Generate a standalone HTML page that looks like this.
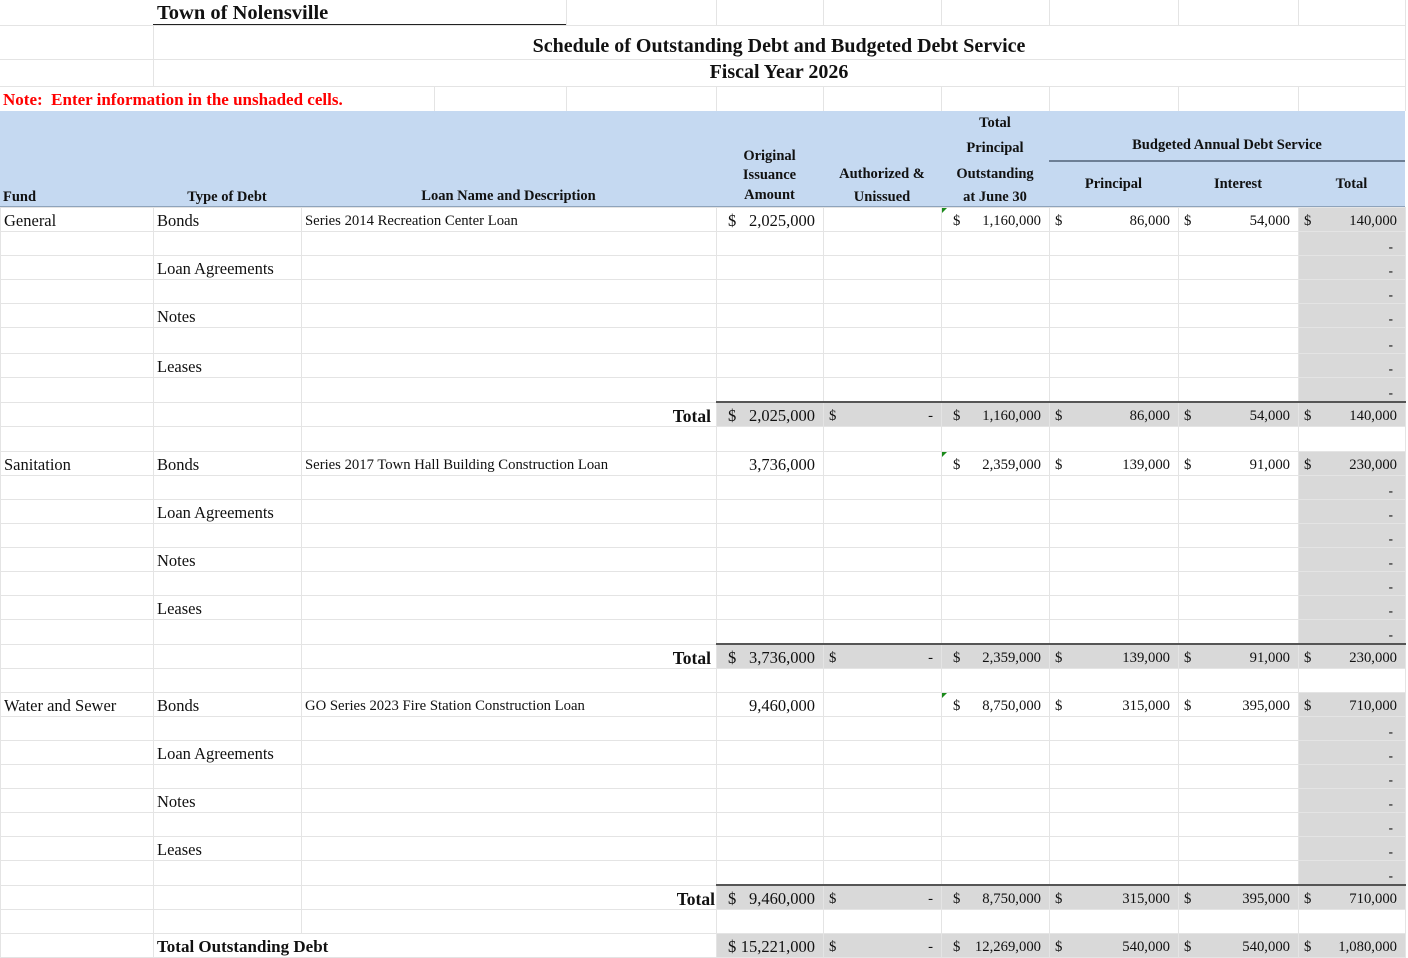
<!DOCTYPE html>
<html><head><meta charset="utf-8"><style>
body{margin:0;background:#fff;width:1408px;height:916px;overflow:hidden;position:relative;font-family:"Liberation Serif",serif;color:#111}
.a{position:absolute;white-space:nowrap}
table{position:absolute;left:0;top:207px;border-collapse:collapse;table-layout:fixed;width:1405px}
td{border:1px solid #e4e4e4;padding:3px 3px 0 3px;font-size:16.5px;height:20px;line-height:16px;vertical-align:middle;white-space:nowrap;overflow:hidden}
td.m{text-align:right;font-size:14.7px;padding-right:8px}
td.m i{float:left;font-style:normal;padding-left:2px}
td.m.p8 i{padding-left:8px}
td.g{background:#d9d9d9}
td.d{text-align:right;padding-right:12px;font-weight:bold;font-size:13px;vertical-align:bottom}
tr.t td.x{background:#d9d9d9;border-top:2px solid #555}
tr.f td.x{background:#d9d9d9}
td.l{font-size:14.7px}
td.big{font-size:16.5px}
td.tt{text-align:right;font-weight:bold;padding-right:5px;font-size:17.5px}
.tri{position:relative}
.tri:before{content:"";position:absolute;left:0;top:0;border-top:5px solid #1a8a1a;border-right:5px solid transparent}
.grid{position:absolute;background:#e4e4e4}
</style></head><body>
<div class="grid" style="left:0;top:25px;width:1405px;height:1px"></div>
<div class="grid" style="left:0;top:59px;width:1405px;height:1px"></div>
<div class="grid" style="left:0;top:86px;width:1405px;height:1px"></div>
<div class="grid" style="left:153px;top:25px;width:1px;height:61px"></div>
<div class="grid" style="left:566px;top:0;width:1px;height:25px"></div>
<div class="grid" style="left:716px;top:0;width:1px;height:25px"></div>
<div class="grid" style="left:823px;top:0;width:1px;height:25px"></div>
<div class="grid" style="left:941px;top:0;width:1px;height:25px"></div>
<div class="grid" style="left:1049px;top:0;width:1px;height:25px"></div>
<div class="grid" style="left:1178px;top:0;width:1px;height:25px"></div>
<div class="grid" style="left:1298px;top:0;width:1px;height:25px"></div>
<div class="grid" style="left:1405px;top:0;width:1px;height:111px"></div>
<div class="grid" style="left:434px;top:86px;width:1px;height:25px"></div>
<div class="grid" style="left:566px;top:86px;width:1px;height:25px"></div>
<div class="grid" style="left:716px;top:86px;width:1px;height:25px"></div>
<div class="grid" style="left:823px;top:86px;width:1px;height:25px"></div>
<div class="grid" style="left:941px;top:86px;width:1px;height:25px"></div>
<div class="grid" style="left:1049px;top:86px;width:1px;height:25px"></div>
<div class="grid" style="left:1178px;top:86px;width:1px;height:25px"></div>
<div class="grid" style="left:1298px;top:86px;width:1px;height:25px"></div>
<div class="a" style="left:157px;top:2px;font-size:20.5px;font-weight:bold">Town of Nolensville</div>
<div class="a" style="left:153px;top:24px;width:413px;height:1px;background:#222"></div>
<div class="a" style="left:0;width:1558px;top:35px;text-align:center;font-size:20px;font-weight:bold">Schedule of Outstanding Debt and Budgeted Debt Service</div>
<div class="a" style="left:0;width:1558px;top:61px;text-align:center;font-size:20px;font-weight:bold">Fiscal Year 2026</div>
<div class="a" style="left:3px;top:90px;font-size:17px;font-weight:bold;color:#ff0000">Note:&nbsp; Enter information in the unshaded cells.</div>
<div class="a" style="left:0;top:111px;width:1405px;height:95px;background:#c5d9f1;border-bottom:2px solid #8ea3bb"></div>
<div class="a" style="left:1049px;top:160px;width:356px;height:2px;background:#6d7f95"></div>
<div style="font-size:14.5px;font-weight:bold">
<div class="a" style="left:3px;top:189px">Fund</div>
<div class="a" style="left:153px;width:148px;text-align:center;top:189px">Type of Debt</div>
<div class="a" style="left:301px;width:415px;text-align:center;top:188px">Loan Name and Description</div>
<div class="a" style="left:716px;width:107px;text-align:center;top:148px">Original</div>
<div class="a" style="left:716px;width:107px;text-align:center;top:167px">Issuance</div>
<div class="a" style="left:716px;width:107px;text-align:center;top:187px">Amount</div>
<div class="a" style="left:823px;width:118px;text-align:center;top:166px">Authorized &amp;</div>
<div class="a" style="left:823px;width:118px;text-align:center;top:189px">Unissued</div>
<div class="a" style="left:941px;width:108px;text-align:center;top:115px">Total</div>
<div class="a" style="left:941px;width:108px;text-align:center;top:140px">Principal</div>
<div class="a" style="left:941px;width:108px;text-align:center;top:166px">Outstanding</div>
<div class="a" style="left:941px;width:108px;text-align:center;top:189px">at June 30</div>
<div class="a" style="left:1049px;width:356px;text-align:center;top:137px">Budgeted Annual Debt Service</div>
<div class="a" style="left:1049px;width:129px;text-align:center;top:176px">Principal</div>
<div class="a" style="left:1178px;width:120px;text-align:center;top:176px">Interest</div>
<div class="a" style="left:1298px;width:107px;text-align:center;top:176px">Total</div>
</div>
<table>
<colgroup><col style="width:153px"><col style="width:148px"><col style="width:415px"><col style="width:107px"><col style="width:118px"><col style="width:108px"><col style="width:129px"><col style="width:120px"><col style="width:107px"></colgroup>
<tr style="height:23px"><td>General</td><td>Bonds</td><td class="l">Series 2014 Recreation Center Loan</td><td class="m p8 big"><i>$</i>2,025,000</td><td></td><td class="m p8 tri"><i>$</i>1,160,000</td><td class="m"><i>$</i>86,000</td><td class="m"><i>$</i>54,000</td><td class="m g"><i>$</i>140,000</td></tr>
<tr style="height:23px"><td></td><td></td><td></td><td></td><td></td><td></td><td></td><td></td><td class="g d">-</td></tr>
<tr style="height:23px"><td></td><td>Loan Agreements</td><td></td><td></td><td></td><td></td><td></td><td></td><td class="g d">-</td></tr>
<tr style="height:22px"><td></td><td></td><td></td><td></td><td></td><td></td><td></td><td></td><td class="g d">-</td></tr>
<tr style="height:22px"><td></td><td>Notes</td><td></td><td></td><td></td><td></td><td></td><td></td><td class="g d">-</td></tr>
<tr style="height:26px"><td></td><td></td><td></td><td></td><td></td><td></td><td></td><td></td><td class="g d">-</td></tr>
<tr style="height:22px"><td></td><td>Leases</td><td></td><td></td><td></td><td></td><td></td><td></td><td class="g d">-</td></tr>
<tr style="height:22px"><td></td><td></td><td></td><td></td><td></td><td></td><td></td><td></td><td class="g d">-</td></tr>
<tr class="t" style="height:22px"><td></td><td></td><td class="tt">Total</td><td class="m p8 x big"><i>$</i>2,025,000</td><td class="m x"><i>$</i>-</td><td class="m p8 x"><i>$</i>1,160,000</td><td class="m x"><i>$</i>86,000</td><td class="m x"><i>$</i>54,000</td><td class="m x"><i>$</i>140,000</td></tr>
<tr style="height:25px"><td></td><td></td><td></td><td></td><td></td><td></td><td></td><td></td><td></td></tr>
<tr style="height:23px"><td>Sanitation</td><td>Bonds</td><td class="l">Series 2017 Town Hall Building Construction Loan</td><td class="m big">3,736,000</td><td></td><td class="m p8 tri"><i>$</i>2,359,000</td><td class="m"><i>$</i>139,000</td><td class="m"><i>$</i>91,000</td><td class="m g"><i>$</i>230,000</td></tr>
<tr style="height:23px"><td></td><td></td><td></td><td></td><td></td><td></td><td></td><td></td><td class="g d">-</td></tr>
<tr style="height:22px"><td></td><td>Loan Agreements</td><td></td><td></td><td></td><td></td><td></td><td></td><td class="g d">-</td></tr>
<tr style="height:22px"><td></td><td></td><td></td><td></td><td></td><td></td><td></td><td></td><td class="g d">-</td></tr>
<tr style="height:22px"><td></td><td>Notes</td><td></td><td></td><td></td><td></td><td></td><td></td><td class="g d">-</td></tr>
<tr style="height:22px"><td></td><td></td><td></td><td></td><td></td><td></td><td></td><td></td><td class="g d">-</td></tr>
<tr style="height:22px"><td></td><td>Leases</td><td></td><td></td><td></td><td></td><td></td><td></td><td class="g d">-</td></tr>
<tr style="height:23px"><td></td><td></td><td></td><td></td><td></td><td></td><td></td><td></td><td class="g d">-</td></tr>
<tr class="t" style="height:22px"><td></td><td></td><td class="tt">Total</td><td class="m p8 x big"><i>$</i>3,736,000</td><td class="m x"><i>$</i>-</td><td class="m p8 x"><i>$</i>2,359,000</td><td class="m x"><i>$</i>139,000</td><td class="m x"><i>$</i>91,000</td><td class="m x"><i>$</i>230,000</td></tr>
<tr style="height:24px"><td></td><td></td><td></td><td></td><td></td><td></td><td></td><td></td><td></td></tr>
<tr style="height:23px"><td>Water and Sewer</td><td>Bonds</td><td class="l">GO Series 2023 Fire Station Construction Loan</td><td class="m big">9,460,000</td><td></td><td class="m p8 tri"><i>$</i>8,750,000</td><td class="m"><i>$</i>315,000</td><td class="m"><i>$</i>395,000</td><td class="m g"><i>$</i>710,000</td></tr>
<tr style="height:23px"><td></td><td></td><td></td><td></td><td></td><td></td><td></td><td></td><td class="g d">-</td></tr>
<tr style="height:22px"><td></td><td>Loan Agreements</td><td></td><td></td><td></td><td></td><td></td><td></td><td class="g d">-</td></tr>
<tr style="height:22px"><td></td><td></td><td></td><td></td><td></td><td></td><td></td><td></td><td class="g d">-</td></tr>
<tr style="height:22px"><td></td><td>Notes</td><td></td><td></td><td></td><td></td><td></td><td></td><td class="g d">-</td></tr>
<tr style="height:22px"><td></td><td></td><td></td><td></td><td></td><td></td><td></td><td></td><td class="g d">-</td></tr>
<tr style="height:22px"><td></td><td>Leases</td><td></td><td></td><td></td><td></td><td></td><td></td><td class="g d">-</td></tr>
<tr style="height:23px"><td></td><td></td><td></td><td></td><td></td><td></td><td></td><td></td><td class="g d">-</td></tr>
<tr class="t" style="height:22px"><td></td><td></td><td class="tt" style="padding-right:1px">Total</td><td class="m p8 x big"><i>$</i>9,460,000</td><td class="m x"><i>$</i>-</td><td class="m p8 x"><i>$</i>8,750,000</td><td class="m x"><i>$</i>315,000</td><td class="m x"><i>$</i>395,000</td><td class="m x"><i>$</i>710,000</td></tr>
<tr style="height:24px"><td></td><td></td><td></td><td></td><td></td><td></td><td></td><td></td><td></td></tr>
<tr class="f" style="height:23px"><td></td><td colspan="2" style="font-weight:bold;font-size:17px">Total Outstanding Debt</td><td class="m p8 x big"><i>$</i>15,221,000</td><td class="m x"><i>$</i>-</td><td class="m p8 x"><i>$</i>12,269,000</td><td class="m x"><i>$</i>540,000</td><td class="m x"><i>$</i>540,000</td><td class="m x"><i>$</i>1,080,000</td></tr>
</table>
</body></html>
